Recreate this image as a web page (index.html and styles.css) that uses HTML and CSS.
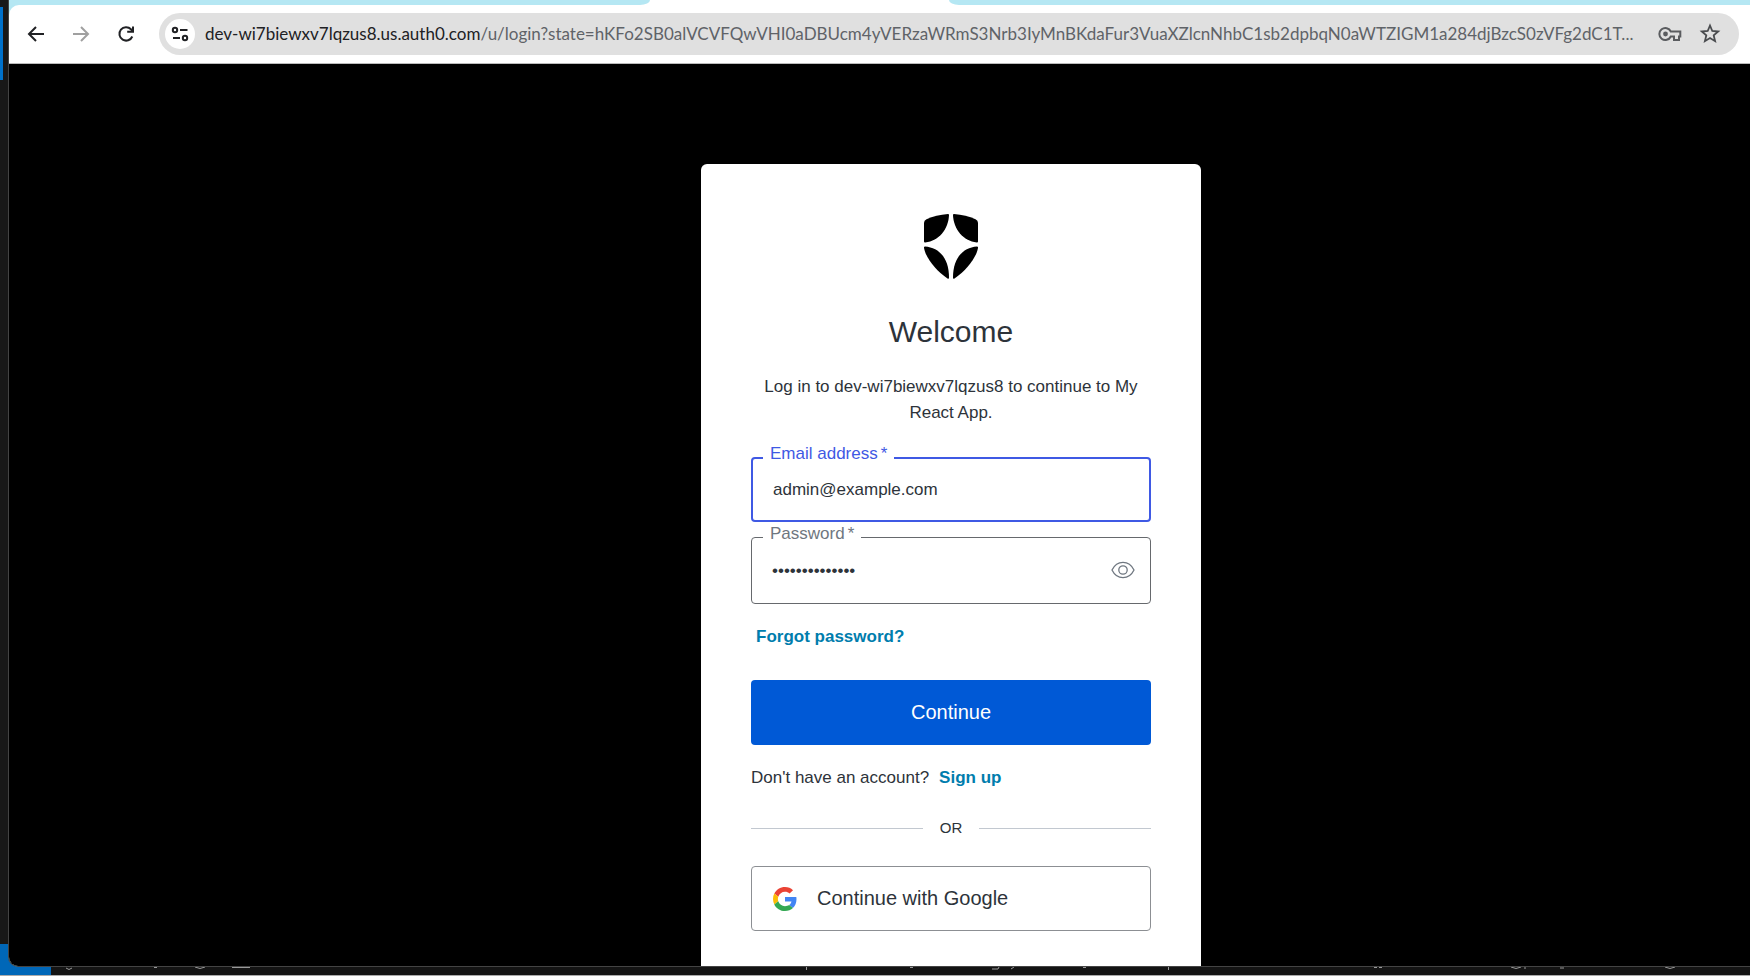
FILE: index.html
```html
<!DOCTYPE html>
<html lang="en">
<head>
<meta charset="utf-8">
<title>Log in | My React App</title>
<link rel="stylesheet" href="styles.css">
</head>
<body>
<div class="desktop">
  <div class="editor-edge"></div>
  <div class="statusbar">
    <div class="remote"></div>
    <svg class="status-marks" width="1699" height="4" viewBox="51 0 1699 4" fill="none" stroke="#999" aria-hidden="true">
      <path d="M66 1q3 3 6 0M195 0q5 3 10 0M232 0.5h18M154 0.5h3M806.500 0v3M910 0.500h3M992 2h6l1-2M1011 2l3-2M1083 0.500h3M1168.500 0v3M1374 0.500h3M1379 0.500h3M1511 0q5 3 10 0M1524 1h2M1560 1h4M1665 0q5 3 10 0"/>
    </svg>
  </div>
  <div class="window">
    <div class="tabstrip">
      <div class="tabs-before"></div>
      <div class="active-tab"></div>
      <div class="tabs-after"></div>
    </div>
    <header class="toolbar">
      <nav class="nav">
        <button class="icon-button" type="button" aria-label="Back">
          <svg width="24" height="24" viewBox="0 0 24 24" fill="none" stroke="#202124" stroke-width="2"><path d="M20 12H5.500M12 5l-7 7 7 7"/></svg>
        </button>
        <button class="icon-button" type="button" aria-label="Forward" disabled>
          <svg width="24" height="24" viewBox="0 0 24 24" fill="none" stroke="#a0a0a0" stroke-width="2"><path d="M4 12h14.500M12 5l7 7-7 7"/></svg>
        </button>
        <button class="icon-button" type="button" aria-label="Reload">
          <svg width="24" height="24" viewBox="0 0 24 24" fill="none" stroke="#202124" stroke-width="2"><path d="M18.300 14.500a6.700 6.700 0 1 1-1.300-7.200L19 9.300M19 4.500v5.300h-5.800"/></svg>
        </button>
      </nav>
      <div class="omnibox">
        <button class="site-info" type="button" aria-label="View site information">
          <svg width="20" height="20" viewBox="0 0 20 20" fill="none" stroke="#202124" stroke-width="2"><circle cx="5" cy="6" r="2.200"/><path d="M10 6h7.500M3 14h7"/><circle cx="15" cy="14" r="2.200"/></svg>
        </button>
        <div class="url" role="textbox" aria-label="Address and search bar" tabindex="0"><span class="host">dev-wi7biewxv7lqzus8.us.auth0.com</span>/u/login?state=hKFo2SB0alVCVFQwVHI0aDBUcm4yVERzaWRmS3Nrb3IyMnBKdaFur3VuaXZlcnNhbC1sb2dpbqN0aWTZIGM1a284djBzcS0zVFg2dC1T...</div>
        <button class="icon-button" type="button" aria-label="Manage passwords">
          <svg width="24" height="24" viewBox="0 0 24 24" fill="none" stroke="#5a5c5f" stroke-width="2"><path d="M12.800 9.500A6 6 0 1 0 12.800 14.500H16V18h5v-3.500h1.300V9.500z"/><circle cx="7.500" cy="12" r="2.400" fill="#5a5c5f" stroke="none"/></svg>
        </button>
        <button class="icon-button" type="button" aria-label="Bookmark this tab">
          <svg width="24" height="24" viewBox="0 0 24 24" fill="none" stroke="#4a4c4f" stroke-width="1.800"><path d="M12 3.500l2.300 5.500 5.900.5-4.500 3.900 1.400 5.800L12 16.100l-5.100 3.100 1.400-5.800L3.800 9.500 9.700 9z"/></svg>
        </button>
      </div>
    </header>
    <main class="page">
      <section class="card">
        <svg class="logo" width="54" height="65" viewBox="0 0 54 65" fill="#000" role="img" aria-label="Auth0">
          <path d="M2.500 5.300Q12 .8 24 0q1 0 1 1C24.500 15 15 27 1.200 28.500q-1.200.1-1.200-1V9Q0 6.500 2.500 5.300z"/>
          <path d="M51.500 5.300Q42 .8 30 0q-1 0-1 1C29.500 15 39 27 52.800 28.500q1.200.1 1.200-1V9q0-2.500-2.500-3.700z"/>
          <path d="M1 32.500C15 33.500 25 44 25 63.500q0 2-1.500 1C11 56 1.500 43 0 34q-.2-1.500 1-1.500z"/>
          <path d="M53 32.500C39 33.500 29 44 29 63.500q0 2 1.500 1C43 56 52.500 43 54 34q.2-1.500-1-1.500z"/>
        </svg>
        <h1 class="title">Welcome</h1>
        <p class="intro">Log in to dev-wi7biewxv7lqzus8 to continue to My React App.</p>
        <form class="form">
          <div class="field field-active">
            <input class="field-input" id="email" type="email" value="admin@example.com">
            <label class="field-label" for="email">Email address<span class="required">*</span></label>
          </div>
          <div class="field">
            <input class="field-input" id="password" type="password" value="adminexample12">
            <label class="field-label" for="password">Password<span class="required">*</span></label>
            <button class="reveal" type="button" aria-label="Show password">
              <svg width="24" height="24" viewBox="0 0 24 24" fill="none" stroke="#6f7780" stroke-width="1.300"><path d="M1 12C6 1.800 18 1.800 23 12 18 22.200 6 22.200 1 12z"/><circle cx="12" cy="12" r="4.200"/></svg>
            </button>
          </div>
          <a class="link forgot" href="#">Forgot password?</a>
          <button class="submit" type="button">Continue</button>
        </form>
        <p class="signup">Don't have an account? <a class="link" href="#">Sign up</a></p>
        <div class="divider">OR</div>
        <button class="google" type="button">
          <svg width="24" height="24" viewBox="0 0 48 48" aria-hidden="true">
            <path fill="#EA4335" d="M24 9.500c3.540 0 6.710 1.220 9.210 3.600l6.850-6.850C35.900 2.380 30.470 0 24 0 14.620 0 6.510 5.380 2.560 13.220l7.980 6.190C12.430 13.720 17.740 9.500 24 9.500z"/>
            <path fill="#4285F4" d="M46.980 24.550c0-1.570-.15-3.090-.38-4.550H24v9.020h12.940c-.58 2.960-2.260 5.480-4.780 7.180l7.730 6c4.510-4.180 7.090-10.360 7.090-17.650z"/>
            <path fill="#FBBC05" d="M10.530 28.590c-.48-1.450-.76-2.990-.76-4.590s.27-3.140.76-4.590l-7.980-6.190C.92 16.460 0 20.120 0 24c0 3.880.92 7.540 2.560 10.780l7.970-6.190z"/>
            <path fill="#34A853" d="M24 48c6.480 0 11.930-2.130 15.890-5.810l-7.730-6c-2.150 1.450-4.920 2.300-8.160 2.300-6.260 0-11.570-4.220-13.470-9.910l-7.980 6.190C6.510 42.620 14.620 48 24 48z"/>
          </svg>
          Continue with Google
        </button>
      </section>
    </main>
  </div>
</div>
</body>
</html>
```
FILE: styles.css
```css
* {
  box-sizing: border-box;
}

body {
  margin: 0;
  font-family: "Liberation Sans", Arial, sans-serif;
}

button {
  padding: 0;
  border: 0;
  background: none;
  font-family: inherit;
}

svg {
  display: block;
  flex: none;
}

.desktop {
  position: relative;
  display: flex;
  flex-direction: column;
  height: 100vh;
  padding: 0 0 9px 8px;
  overflow: hidden;
  background: #181818;
}

/* The editor behind the browser window */
.editor-edge {
  position: absolute;
  top: 7px;
  left: 0;
  width: 3px;
  height: 73px;
  background: #0071ca;
}

.statusbar {
  position: absolute;
  bottom: 0;
  left: 0;
  right: 0;
  display: flex;
  height: 32px;
  border-bottom: 1px solid #aaa;
  background: #141414;
}

.remote {
  width: 51px;
  background: #0067b8;
}

.status-marks {
  margin-top: 23px;
}

.window {
  position: relative;
  display: flex;
  flex: 1;
  flex-direction: column;
  min-height: 0;
  overflow: hidden;
  border: solid #444;
  border-width: 0 0 1px 1px;
  border-radius: 0 0 0 10px;
  background: #b5e7f3;
}

.tabstrip {
  display: flex;
  height: 5px;
  background: #fff;
}

.tabs-before,
.tabs-after {
  background: #b5e7f3;
}

.tabs-before {
  flex: 641;
  border-bottom-right-radius: 10px 5px;
}

.active-tab {
  flex: 299;
}

.tabs-after {
  flex: 801;
  border-bottom-left-radius: 10px 5px;
}

.toolbar {
  display: flex;
  align-items: center;
  gap: 21px;
  padding: 8px 11px 8px 15px;
  border-bottom: 1px solid #bbb;
  border-radius: 10px 0 0 0;
  background: #fff;
}

.nav {
  display: flex;
  gap: 21px;
}

.icon-button {
  flex: none;
}

.omnibox {
  display: flex;
  flex: 1;
  align-items: center;
  gap: 16px;
  min-width: 0;
  height: 42px;
  padding: 0 17px 0 6px;
  border-radius: 21px;
  background: #e0e0e0;
}

.site-info {
  display: grid;
  flex: none;
  place-items: center;
  width: 30px;
  height: 30px;
  margin-right: -6px;
  border-radius: 50%;
  background: #fff;
}

.url {
  flex: 1;
  min-width: 0;
  overflow: hidden;
  color: #5f6368;
  font: 17px/24px Lato, "Open Sans", sans-serif;
  text-overflow: ellipsis;
  white-space: nowrap;
}

.host {
  color: #202124;
}

.page {
  display: flex;
  flex: 1;
  justify-content: center;
  min-height: 0;
  padding: 100px 0 0 143px;
  overflow: hidden;
  background: #000;
}

.card {
  display: flex;
  flex-direction: column;
  width: 500px;
  padding: 50px;
  border-radius: 6px 6px 0 0;
  background: #fff;
  color: #2d333a;
  font-size: 17px;
  line-height: 26px;
}

.logo {
  align-self: center;
}

.title {
  margin: 35px 0 24px;
  font-size: 30px;
  font-weight: 400;
  line-height: 36px;
  text-align: center;
}

.intro {
  margin: 0 0 31px;
  text-align: center;
}

.form {
  display: flex;
  flex-direction: column;
  align-items: stretch;
}

.field {
  position: relative;
  margin-bottom: 15px;
}

.field-input {
  display: block;
  width: 100%;
  height: 67px;
  padding: 0 60px 0 20px;
  border: 1px solid #66696d;
  border-radius: 4px;
  outline: 0;
  background: #fff;
  color: #2d333a;
  font: inherit;
}

.field-label {
  position: absolute;
  top: -14px;
  left: 12px;
  padding: 0 7px;
  background: #fff;
  color: #6f7780;
  line-height: 22px;
}

.field-active .field-input {
  height: 65px;
  border: 2px solid #3f59e4;
}

.field-active .field-label {
  color: #3f59e4;
}

.required {
  margin-left: 3px;
}

.reveal {
  position: absolute;
  top: 21px;
  right: 16px;
}

.link {
  color: #007dad;
  font-weight: 700;
  text-decoration: none;
}

.forgot {
  align-self: flex-start;
  margin: 5px 0 30px 5px;
}

.submit {
  height: 65px;
  border-radius: 4px;
  background: #0059d6;
  color: #fff;
  font-size: 20px;
}

.signup {
  display: flex;
  gap: 10px;
  margin: 20px 0 27px;
}

.divider {
  display: flex;
  align-items: center;
  gap: 17px;
  margin-bottom: 28px;
  font-size: 15px;
  line-height: 20px;
}

.divider::before,
.divider::after {
  flex: 1;
  height: 1px;
  background: #c2c8d0;
  content: "";
}

.google {
  display: flex;
  flex: none;
  align-items: center;
  gap: 20px;
  height: 65px;
  padding: 0 21px;
  border: 1px solid #8c8f93;
  border-radius: 4px;
  color: #2d333a;
  font-size: 20px;
}
```
